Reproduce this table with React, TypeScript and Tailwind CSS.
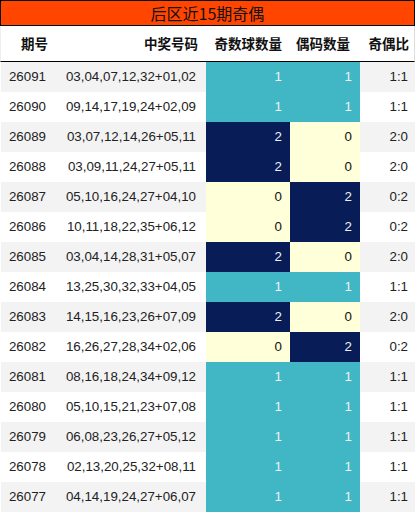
import React from "react";

const rows: [string, string, number, number, string][] = [
  ["26091", "03,04,07,12,32+01,02", 1, 1, "1:1"],
  ["26090", "09,14,17,19,24+02,09", 1, 1, "1:1"],
  ["26089", "03,07,12,14,26+05,11", 2, 0, "2:0"],
  ["26088", "03,09,11,24,27+05,11", 2, 0, "2:0"],
  ["26087", "05,10,16,24,27+04,10", 0, 2, "0:2"],
  ["26086", "10,11,18,22,35+06,12", 0, 2, "0:2"],
  ["26085", "03,04,14,28,31+05,07", 2, 0, "2:0"],
  ["26084", "13,25,30,32,33+04,05", 1, 1, "1:1"],
  ["26083", "14,15,16,23,26+07,09", 2, 0, "2:0"],
  ["26082", "16,26,27,28,34+02,06", 0, 2, "0:2"],
  ["26081", "08,16,18,24,34+09,12", 1, 1, "1:1"],
  ["26080", "05,10,15,21,23+07,08", 1, 1, "1:1"],
  ["26079", "06,08,23,26,27+05,12", 1, 1, "1:1"],
  ["26078", "02,13,20,25,32+08,11", 1, 1, "1:1"],
  ["26077", "04,14,19,24,27+06,07", 1, 1, "1:1"],
];

const cellColor = (v: number) =>
  v === 0
    ? "bg-[#ffffd9] text-[#111]"
    : v === 1
    ? "bg-[#41b6c4] text-[#f1f1f1]"
    : "bg-[#081d58] text-[#f1f1f1]";

export default function App() {
  return (
    <div
      className="w-[416px] h-[513px] bg-white overflow-hidden"
      style={{ fontFamily: '"Liberation Sans", Arial, "Noto Sans CJK SC", sans-serif' }}
    >
      <div
        className="w-[415px] h-[26px] bg-[#ff4500] border border-black flex items-center justify-center text-[16px] text-[#111] leading-none"
        style={{ fontFamily: '"Noto Sans CJK SC", sans-serif' }}
      >
        后区近15期奇偶
      </div>
      <div
        className="w-[415px] h-[36px] grid grid-cols-[57px_148px_84px_70px_56px] items-center border-b border-black border-l border-r border-l-[#eee] border-r-[#ddd] text-[13.5px] font-bold text-[#111] whitespace-nowrap"
        style={{ fontFamily: '"Noto Sans CJK SC", sans-serif' }}
      >
        <div className="text-right pr-[10px]">期号</div>
        <div className="text-right pr-[8px]">中奖号码</div>
        <div className="text-right pr-[8px]">奇数球数量</div>
        <div className="text-right pr-[10px]">偶码数量</div>
        <div className="text-right pr-[7px]">奇偶比</div>
      </div>
      {rows.map((r, i) => (
        <div
          key={r[0]}
          className={`w-[415px] h-[30px] grid grid-cols-[57px_148px_84px_70px_56px] text-[13.33px] text-[#222] border-l border-white ${
            i % 2 === 0 ? "bg-[#f3f3f3]" : "bg-white"
          }`}
        >
          <div className="flex items-center justify-end pr-[12px]">{r[0]}</div>
          <div className="flex items-center justify-end pr-[10px]">{r[1]}</div>
          <div className={`flex items-center justify-end pr-[8px] ${cellColor(r[2])}`}>{r[2]}</div>
          <div className={`flex items-center justify-end pr-[8px] ${cellColor(r[3])}`}>{r[3]}</div>
          <div className="flex items-center justify-end pr-[8px]">{r[4]}</div>
        </div>
      ))}
    </div>
  );
}
